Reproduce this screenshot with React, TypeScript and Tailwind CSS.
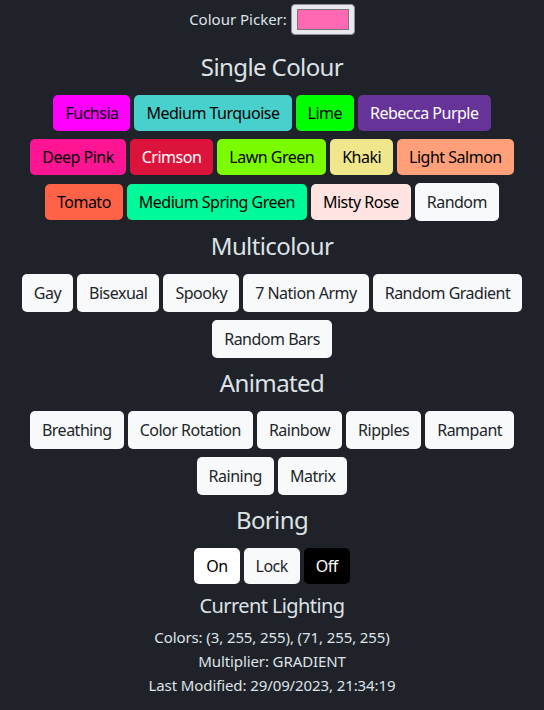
import React from "react";

type B = { label: string; bg: string; fg: string; tall?: boolean };

const single: B[][] = [
  [
    { label: "Fuchsia", bg: "bg-[#ff00ff]", fg: "text-[#000000]" },
    { label: "Medium Turquoise", bg: "bg-[#48d1cc]", fg: "text-[#000000]" },
    { label: "Lime", bg: "bg-[#00ff00]", fg: "text-[#000000]" },
    { label: "Rebecca Purple", bg: "bg-[#663399]", fg: "text-[#ffffff]" },
  ],
  [
    { label: "Deep Pink", bg: "bg-[#ff1493]", fg: "text-[#000000]" },
    { label: "Crimson", bg: "bg-[#dc143c]", fg: "text-[#ffffff]" },
    { label: "Lawn Green", bg: "bg-[#7cfc00]", fg: "text-[#000000]" },
    { label: "Khaki", bg: "bg-[#f0e68c]", fg: "text-[#000000]" },
    { label: "Light Salmon", bg: "bg-[#ffa07a]", fg: "text-[#000000]" },
  ],
  [
    { label: "Tomato", bg: "bg-[#ff6347]", fg: "text-[#000000]" },
    { label: "Medium Spring Green", bg: "bg-[#00fa9a]", fg: "text-[#000000]" },
    { label: "Misty Rose", bg: "bg-[#ffe4e1]", fg: "text-[#000000]" },
    { label: "Random", bg: "bg-[#f8f9fa]", fg: "text-[#212529]", tall: true },
  ],
];

const light = (label: string): B => ({ label, bg: "bg-[#f8f9fa]", fg: "text-[#212529]", tall: true });

const multi: B[][] = [
  ["Gay", "Bisexual", "Spooky", "7 Nation Army", "Random Gradient"].map(light),
  ["Random Bars"].map(light),
];

const animated: B[][] = [
  ["Breathing", "Color Rotation", "Rainbow", "Ripples", "Rampant"].map(light),
  ["Raining", "Matrix"].map(light),
];

const boring: B[][] = [
  [
    { label: "On", bg: "bg-[#ffffff]", fg: "text-[#000000]" },
    { label: "Lock", bg: "bg-[#f8f9fa]", fg: "text-[#212529]" },
    { label: "Off", bg: "bg-[#000000]", fg: "text-[#ffffff]" },
  ],
];

function Rows({ rows }: { rows: B[][] }) {
  return (
    <div className="flex flex-col items-center">
      {rows.map((r, i) => (
        <div key={i} className="flex justify-center items-center">
          {r.map((b) => (
            <button
              key={b.label}
              className={`${b.bg} ${b.fg} ${b.tall ? "h-[38px]" : "h-[36px]"} mx-[2px] my-[4px] px-[12px] rounded-[5px] text-[16px] leading-[24px] tracking-[-0.5px] whitespace-nowrap`}
            >
              {b.label}
            </button>
          ))}
        </div>
      ))}
    </div>
  );
}

function Heading({ children, first }: { children: React.ReactNode; first?: boolean }) {
  return (
    <div
      className={`${first ? "mt-[17px]" : "mt-[6px]"} mb-[10px] text-[24px] leading-[29px] tracking-[-0.6px] text-[#dee2e6]`}
    >
      {children}
    </div>
  );
}

export default function App() {
  return (
    <div
      className="min-h-[710px] w-full bg-[#1f2329] text-[#dee2e6] flex flex-col items-center pt-[4px]"
      style={{ fontFamily: '"Noto Sans", "Open Sans", sans-serif' }}
    >
      <div className="flex items-center h-[31px] text-[15px]">
        <span className="mr-[4px]">Colour Picker:</span>
        <div className="w-[64px] h-[31px] rounded-[4px] bg-[#e9e9ed] border border-[#8f8f9d] flex items-center justify-center">
          <div className="w-[52px] h-[21px] bg-[#ff69b4] border border-[#777777]" />
        </div>
      </div>

      <Heading first>Single Colour</Heading>
      <Rows rows={single} />

      <Heading>Multicolour</Heading>
      <Rows rows={multi} />

      <Heading>Animated</Heading>
      <Rows rows={animated} />

      <Heading>Boring</Heading>
      <Rows rows={boring} />

      <div className="mt-[6px] text-[20px] leading-[24px] tracking-[-0.6px]">Current Lighting</div>
      <div className="mt-[7px] flex flex-col items-center text-[15px] leading-[24px] tracking-[-0.1px]">
        <div>Colors: (3, 255, 255), (71, 255, 255)</div>
        <div>Multiplier: GRADIENT</div>
        <div>Last Modified: 29/09/2023, 21:34:19</div>
      </div>
    </div>
  );
}
